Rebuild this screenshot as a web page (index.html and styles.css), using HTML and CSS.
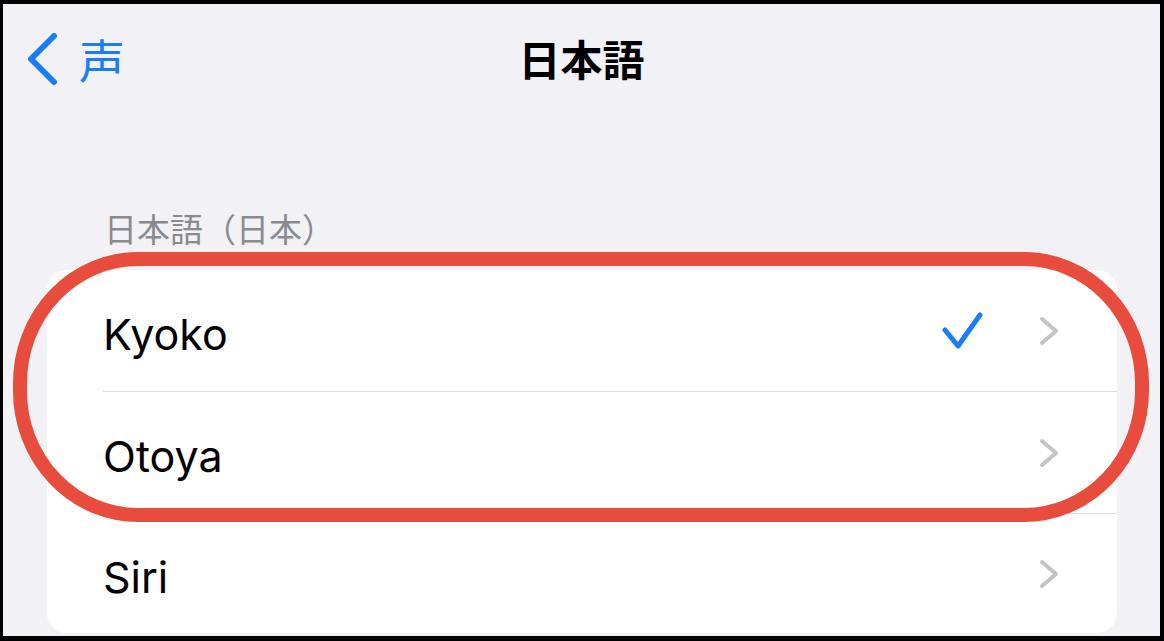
FILE: index.html
```html
<!DOCTYPE html>
<html lang="ja">
<head>
<meta charset="utf-8">
<title>日本語</title>
<link rel="stylesheet" href="styles.css">
</head>
<body>
<div class="screen">
  <div class="nav">
    <div class="back">
      <svg class="back-chevron" width="34" height="54" viewBox="0 0 34 54"><path d="M27 3 L4 26 L27 49" fill="none" stroke="#1a7cf7" stroke-width="6" stroke-linecap="round" stroke-linejoin="round"/></svg>
      <span class="back-label">声</span>
    </div>
    <div class="title">日本語</div>
    <div class="nav-spacer"></div>
  </div>
  <div class="section-header">日本語（日本）</div>
  <div class="card">
    <div class="row">
      <div class="row-inner">
        <span class="label">Kyoko</span>
        <svg class="check" width="42" height="40" viewBox="0 0 42 40"><path d="M3 19 L16 35 L38 4" fill="none" stroke="#1a7cf7" stroke-width="5" stroke-linecap="round" stroke-linejoin="round"/></svg>
        <svg class="chev" width="22" height="30" viewBox="0 0 22 30"><path d="M4 3 L18 15 L4 27" fill="none" stroke="#c4c4c8" stroke-width="4" stroke-linecap="round" stroke-linejoin="round"/></svg>
      </div>
    </div>
    <div class="row">
      <div class="row-inner">
        <span class="label">Otoya</span>
        <svg class="chev" width="22" height="30" viewBox="0 0 22 30"><path d="M4 3 L18 15 L4 27" fill="none" stroke="#c4c4c8" stroke-width="4" stroke-linecap="round" stroke-linejoin="round"/></svg>
      </div>
    </div>
    <div class="row">
      <div class="row-inner last">
        <span class="label">Siri</span>
        <svg class="chev" width="22" height="30" viewBox="0 0 22 30"><path d="M4 3 L18 15 L4 27" fill="none" stroke="#c4c4c8" stroke-width="4" stroke-linecap="round" stroke-linejoin="round"/></svg>
      </div>
    </div>
  </div>
  <svg class="annotation" width="1164" height="641" viewBox="0 0 1164 641">
    <rect x="20" y="259" width="1122" height="256" rx="118" ry="124" fill="none" stroke="#e84c3d" stroke-width="14"/>
  </svg>
</div>
</body>
</html>
```

FILE: styles.css
```css
* { box-sizing: border-box; }
html, body { margin: 0; padding: 0; }
body {
  background: #000;
  width: 1164px;
  height: 641px;
  overflow: hidden;
  font-family: Inter, "Noto Sans CJK JP", sans-serif;
}
.screen {
  position: relative;
  margin: 4px 4px 0 3px;
  height: 632px;
  background: #f1f1f6;
  overflow: hidden;
}
.nav {
  height: 112px;
  display: grid;
  grid-template-columns: 1fr auto 1fr;
  align-items: center;
}
.back {
  display: flex;
  align-items: center;
  padding-left: 24px;
  gap: 18px;
}
.back-chevron { display: block; }
.back-label {
  font-family: "Noto Sans CJK JP", sans-serif;
  font-size: 46px;
  color: #1a7cf7;
  line-height: 1;
  margin-top: -4px;
}
.title {
  font-family: "Noto Sans CJK JP", sans-serif;
  font-weight: 700;
  font-size: 42px;
  line-height: 1;
  color: #000;
  margin-top: -4px;
}
.section-header {
  margin-top: 94px;
  padding-left: 101px;
  font-family: "Noto Sans CJK JP", sans-serif;
  font-size: 33px;
  line-height: 36px;
  color: #8a8a8e;
}
.card {
  margin: 24px 43px 0 44px;
  background: #fff;
  border-radius: 20px;
  height: 363px;
}
.row {
  padding-left: 56px;
}
.row-inner {
  height: 122px;
  display: flex;
  align-items: center;
  padding-right: 57px;
  border-bottom: 1px solid #dededf;
}
.row-inner.last { border-bottom: none; height: 119px; }
.label {
  flex: 1;
  font-size: 43px;
  color: #000;
  padding-top: 6px;
}
.check {
  display: block;
  margin-right: 54px;
}
.chev { display: block; }
.annotation {
  position: absolute;
  left: -3px;
  top: -4px;
  pointer-events: none;
}
```
